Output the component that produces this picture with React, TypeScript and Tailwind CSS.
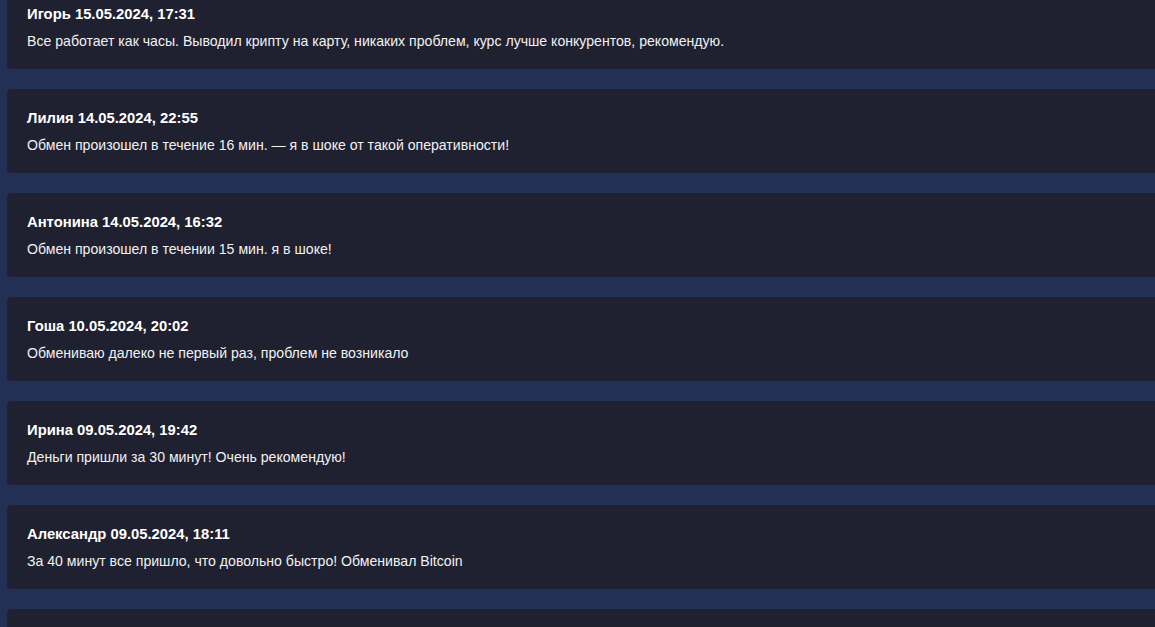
import React from "react";

const reviews = [
  { name: "Игорь", date: "15.05.2024, 17:31", text: "Все работает как часы. Выводил крипту на карту, никаких проблем, курс лучше конкурентов, рекомендую." },
  { name: "Лилия", date: "14.05.2024, 22:55", text: "Обмен произошел в течение 16 мин. — я в шоке от такой оперативности!" },
  { name: "Антонина", date: "14.05.2024, 16:32", text: "Обмен произошел в течении 15 мин. я в шоке!" },
  { name: "Гоша", date: "10.05.2024, 20:02", text: "Обмениваю далеко не первый раз, проблем не возникало" },
  { name: "Ирина", date: "09.05.2024, 19:42", text: "Деньги пришли за 30 минут! Очень рекомендую!" },
  { name: "Александр", date: "09.05.2024, 18:11", text: "За 40 минут все пришло, что довольно быстро! Обменивал Bitcoin" },
];

export default function App() {
  return (
    <div
      className="h-[627px] w-full overflow-hidden bg-[#233056] pl-[7px]"
      style={{ fontFamily: '"Liberation Sans", Arial, sans-serif' }}
    >
      <div className="-mt-[15px] flex w-[1160px] flex-col gap-5">
        {reviews.map((r, i) => (
          <div key={i} className="rounded-[4px] bg-[#1f2130] p-5 text-white">
            <div className="text-[14.8px] font-bold leading-[18px]">
              {r.name} {r.date}
            </div>
            <div className="mt-[10px] text-[14.1px] leading-[16px] text-[#f2f2f2]">{r.text}</div>
          </div>
        ))}
        <div className="h-[84px] rounded-[4px] bg-[#1f2130]" />
      </div>
    </div>
  );
}
